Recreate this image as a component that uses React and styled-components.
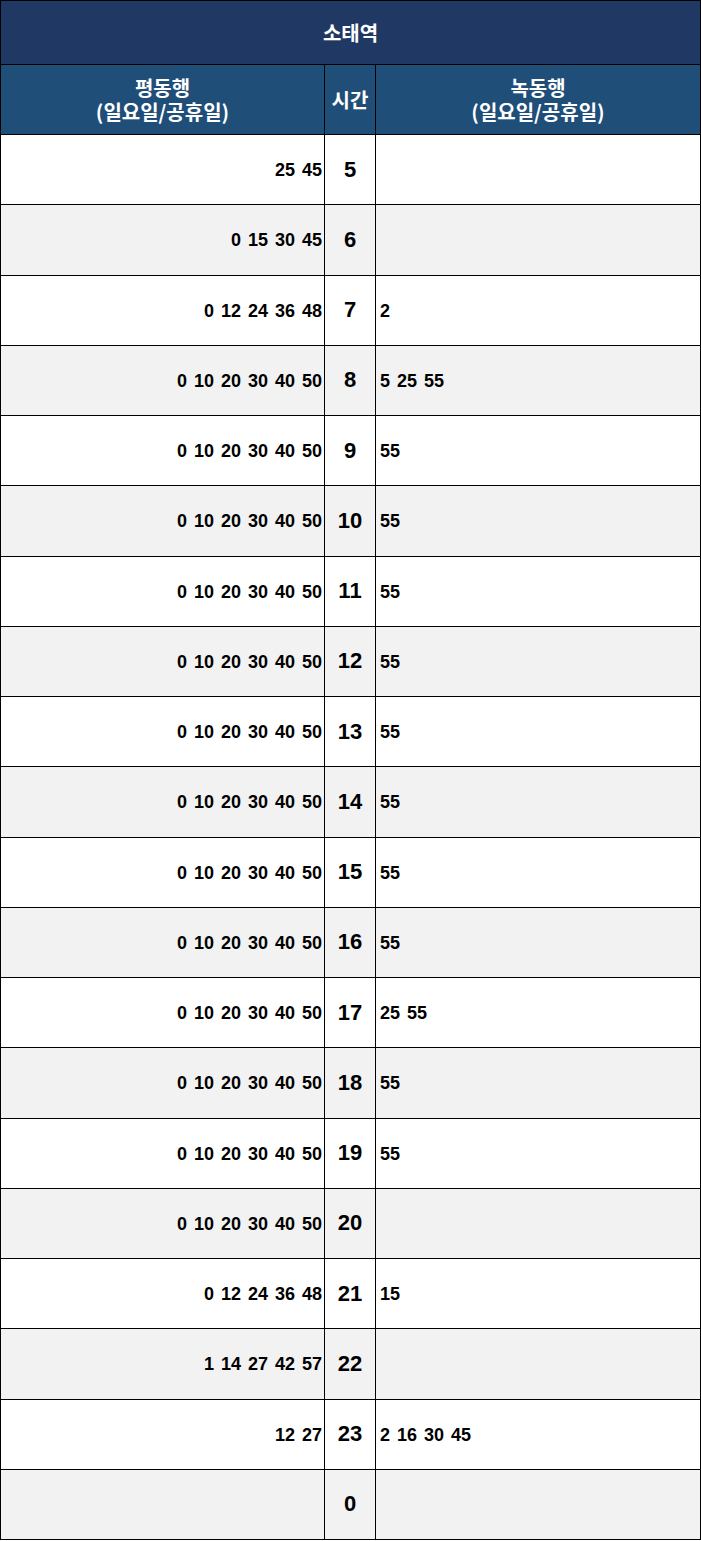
import React from "react";
import styled, { createGlobalStyle } from "styled-components";

const Global = createGlobalStyle`
  html, body { margin: 0; padding: 0; background: #ffffff; }
  body { font-family: "Liberation Sans", Arial, "Noto Sans CJK KR", sans-serif; }
`;

const Table = styled.table`
  width: 700px;
  border-collapse: collapse;
  table-layout: fixed;
  font-weight: bold;
`;

const TitleCell = styled.th`
  height: 63px;
  background: #203864;
  color: #ffffff;
  border: 1px solid #000;
  font-family: "Noto Sans CJK KR", sans-serif;
  font-size: 20px;
  font-weight: bold;
  padding: 0;
`;

const HeadCell = styled.th`
  height: 69px;
  background: #1f4e79;
  color: #ffffff;
  border: 1px solid #000;
  font-family: "Noto Sans CJK KR", sans-serif;
  font-size: 20px;
  line-height: 24px;
  font-weight: bold;
  padding: 0;
  white-space: nowrap;
`;

const Row = styled.tr`
  height: 70.25px;
  background: ${(p) => (p.$alt ? "#f2f2f2" : "#ffffff")};
`;

const Cell = styled.td`
  border: 1px solid #000;
  padding: 2px ${(p) => (p.$align === "right" ? "2px" : "0")} 0 ${(p) => (p.$align === "left" ? "4px" : "0")};
  text-align: ${(p) => p.$align};
  font-size: 18px;
  color: #000;
  word-spacing: 2px;
  white-space: nowrap;
`;

const HourCell = styled.td`
  border: 1px solid #000;
  text-align: center;
  font-size: 22px;
  color: #000;
  padding: 0;
`;

const rows = [
  ["25 45", 5, ""],
  ["0 15 30 45", 6, ""],
  ["0 12 24 36 48", 7, "2"],
  ["0 10 20 30 40 50", 8, "5 25 55"],
  ["0 10 20 30 40 50", 9, "55"],
  ["0 10 20 30 40 50", 10, "55"],
  ["0 10 20 30 40 50", 11, "55"],
  ["0 10 20 30 40 50", 12, "55"],
  ["0 10 20 30 40 50", 13, "55"],
  ["0 10 20 30 40 50", 14, "55"],
  ["0 10 20 30 40 50", 15, "55"],
  ["0 10 20 30 40 50", 16, "55"],
  ["0 10 20 30 40 50", 17, "25 55"],
  ["0 10 20 30 40 50", 18, "55"],
  ["0 10 20 30 40 50", 19, "55"],
  ["0 10 20 30 40 50", 20, ""],
  ["0 12 24 36 48", 21, "15"],
  ["1 14 27 42 57", 22, ""],
  ["12 27", 23, "2 16 30 45"],
  ["", 0, ""],
];

export default function App() {
  return (
    <>
      <Global />
      <Table>
        <colgroup>
          <col style={{ width: 324 }} />
          <col style={{ width: 51 }} />
          <col style={{ width: 325 }} />
        </colgroup>
        <thead>
          <tr>
            <TitleCell colSpan={3}>소태역</TitleCell>
          </tr>
          <tr>
            <HeadCell>
              평동행
              <br />
              (일요일/공휴일)
            </HeadCell>
            <HeadCell>시간</HeadCell>
            <HeadCell>
              녹동행
              <br />
              (일요일/공휴일)
            </HeadCell>
          </tr>
        </thead>
        <tbody>
          {rows.map(([l, h, r], i) => (
            <Row key={i} $alt={i % 2 === 1}>
              <Cell $align="right">{l}</Cell>
              <HourCell>{h}</HourCell>
              <Cell $align="left">{r}</Cell>
            </Row>
          ))}
        </tbody>
      </Table>
    </>
  );
}
